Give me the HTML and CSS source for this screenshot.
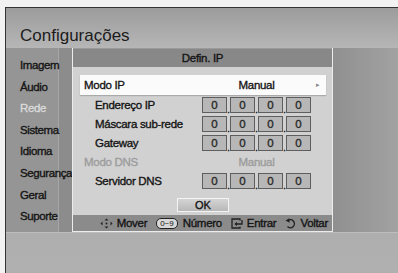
FILE: index.html
```html
<!DOCTYPE html>
<html lang="pt">
<head>
  <meta charset="UTF-8" />
  <title>Configurações</title>
  <link rel="stylesheet" href="styles.css">
</head>
<body>
  <div class="screen">
    <header class="top">
      <h1>Configurações</h1>
    </header>

    <div class="band">
      <ul class="menu">
        <li>Imagem</li>
        <li>Áudio</li>
        <li class="sel">Rede</li>
        <li>Sistema</li>
        <li>Idioma</li>
        <li>Segurança</li>
        <li>Geral</li>
        <li>Suporte</li>
      </ul>

      <div class="dialog">
        <div class="dlg-title">Defin. IP</div>
        <div class="dlg-body">
          <div class="row focus">
            <span class="label">Modo IP</span>
            <span class="value">Manual</span>
            <span class="arrow">&#9656;</span>
          </div>
          <div class="row sub">
            <span class="label">Endereço IP</span>
            <span class="ip"><b>0</b><i>.</i><b>0</b><i>.</i><b>0</b><i>.</i><b>0</b></span>
          </div>
          <div class="row sub">
            <span class="label">Máscara sub-rede</span>
            <span class="ip"><b>0</b><i>.</i><b>0</b><i>.</i><b>0</b><i>.</i><b>0</b></span>
          </div>
          <div class="row sub">
            <span class="label">Gateway</span>
            <span class="ip"><b>0</b><i>.</i><b>0</b><i>.</i><b>0</b><i>.</i><b>0</b></span>
          </div>
          <div class="row off">
            <span class="label">Modo DNS</span>
            <span class="value">Manual</span>
          </div>
          <div class="row sub">
            <span class="label">Servidor DNS</span>
            <span class="ip"><b>0</b><i>.</i><b>0</b><i>.</i><b>0</b><i>.</i><b>0</b></span>
          </div>
          <div class="ok">OK</div>
        </div>
        <div class="dlg-foot">
          <span class="hint">
            <svg width="13" height="11" viewBox="0 0 13 11"><path d="M6.5 0.5 L8.5 2.5 H4.5Z M6.5 10.5 L4.5 8.5 H8.5Z M0.5 5.5 L2.5 3.5 V7.5Z M12.5 5.5 L10.5 7.5 V3.5Z" fill="#222"/><circle cx="6.5" cy="5.5" r="1" fill="#222"/></svg>
            Mover
          </span>
          <span class="hint"><span class="pill">0~9</span>Número</span>
          <span class="hint">
            <svg width="12" height="11" viewBox="0 0 12 11"><path d="M9 2.5 V1 H1 V10 H9 V8.5" fill="none" stroke="#222" stroke-width="1.3"/><path d="M11 2 V6 H4.5" fill="none" stroke="#222" stroke-width="1.3"/><path d="M3.5 6 L6 3.8 V8.2Z" fill="#222"/></svg>
            Entrar
          </span>
          <span class="hint">
            <svg width="11" height="11" viewBox="0 0 11 11"><path d="M3 2.5 A4 4 0 1 1 2.5 8.5" fill="none" stroke="#222" stroke-width="1.4"/><path d="M0.5 2.5 L4.5 0.3 V4.7Z" fill="#222"/></svg>
            Voltar
          </span>
        </div>
      </div>
    </div>

    <div class="floor"></div>
  </div>
</body>
</html>
```

FILE: styles.css
```css
body { margin: 0; background: #f2f2f2; padding: 7px 0 0 5px; font-family: "Liberation Sans", Arial, sans-serif; color: #141414; }
.screen {
  height: 265px; border-top: 1px solid #333; border-left: 1px solid #333;
  background: linear-gradient(#a4a4a4, #b0b0b0);
  overflow: hidden;
}
.top { height: 40px; background: linear-gradient(#9c9c9c, #b6b6b6); }
.top h1 { margin: 0; padding: 18px 0 0 14px; font-size: 17px; font-weight: normal; color: #1c1c1c; line-height: 20px; }

.band { height: 184px; display: flex; background: linear-gradient(90deg, #8c8c8c 80%, #a2a2a2); border-bottom: 1px solid #bdbdbd; }
.menu { list-style: none; margin: 0; padding: 7px 0 0 14px; width: 38px; background: #959595; border-right: 1px solid #a6a6a6; }
.menu li { height: 21.6px; line-height: 21.6px; font-size: 11.5px; letter-spacing: -0.4px; -webkit-text-stroke: 0.35px #141414; white-space: nowrap; }
.menu li.sel { color: #dcdcdc; -webkit-text-stroke: 0.3px #dcdcdc; }

.dialog {
  margin-left: 13px; width: 259px; height: 183px;
  border: 1px solid #ececec; border-top: none;
  display: flex; flex-direction: column; background: #d1d1d1;
}
.dlg-title { height: 18px; line-height: 18px; text-align: center; font-size: 11.5px; letter-spacing: -0.3px; -webkit-text-stroke: 0.35px #141414; background: #888; border-top: 1px solid #9a9a9a; }
.dlg-body { flex: 1; padding: 8px 6px 0 7px; }
.row { height: 19px; display: flex; align-items: center; font-size: 11.5px; letter-spacing: -0.3px; -webkit-text-stroke: 0.35px currentColor; }
.row.focus { height: 20px; background: #fbfbfb; box-shadow: 0 1px 1px #aaa; }
.row .label { box-sizing: border-box; width: 122px; padding-left: 4px; white-space: nowrap; }
.row.sub .label { padding-left: 15px; }
.row .value { width: 109px; text-align: center; }
.row.off { color: #9c9c9c; }
.row .arrow { font-size: 7px; color: #888; margin-left: 5px; -webkit-text-stroke: 0; }
.ip { display: flex; align-items: flex-end; letter-spacing: 0; }
.ip b { font-weight: normal; width: 23px; height: 14px; line-height: 14px; text-align: center; background: #b7b7b7; border: 1px solid #5e5e5e; color: #2a2a2a; }
.ip i { width: 3px; font-style: normal; font-size: 9px; line-height: 6px; text-align: center; }

.ok {
  width: 50px; height: 12px; line-height: 12px; margin: 8px auto 0;
  border: 1px solid #f4f4f4; background: linear-gradient(#d4d4d4, #b8b8b8);
  text-align: center; font-size: 11px; -webkit-text-stroke: 0.35px #141414;
}

.dlg-foot {
  height: 16px; background: #8b8b8b; display: flex; justify-content: flex-end;
  align-items: center; gap: 9px; padding-right: 4px; font-size: 11.5px; letter-spacing: -0.3px; -webkit-text-stroke: 0.35px #141414;
}
.hint { display: flex; align-items: center; gap: 4px; white-space: nowrap; }
.pill { font-size: 8px; line-height: 9px; padding: 0 3px; letter-spacing: 0; -webkit-text-stroke: 0; border: 1px solid #222; border-radius: 5px; background: #d8d8d8; margin-right: 1px; }
.floor { height: 40px; }
```
